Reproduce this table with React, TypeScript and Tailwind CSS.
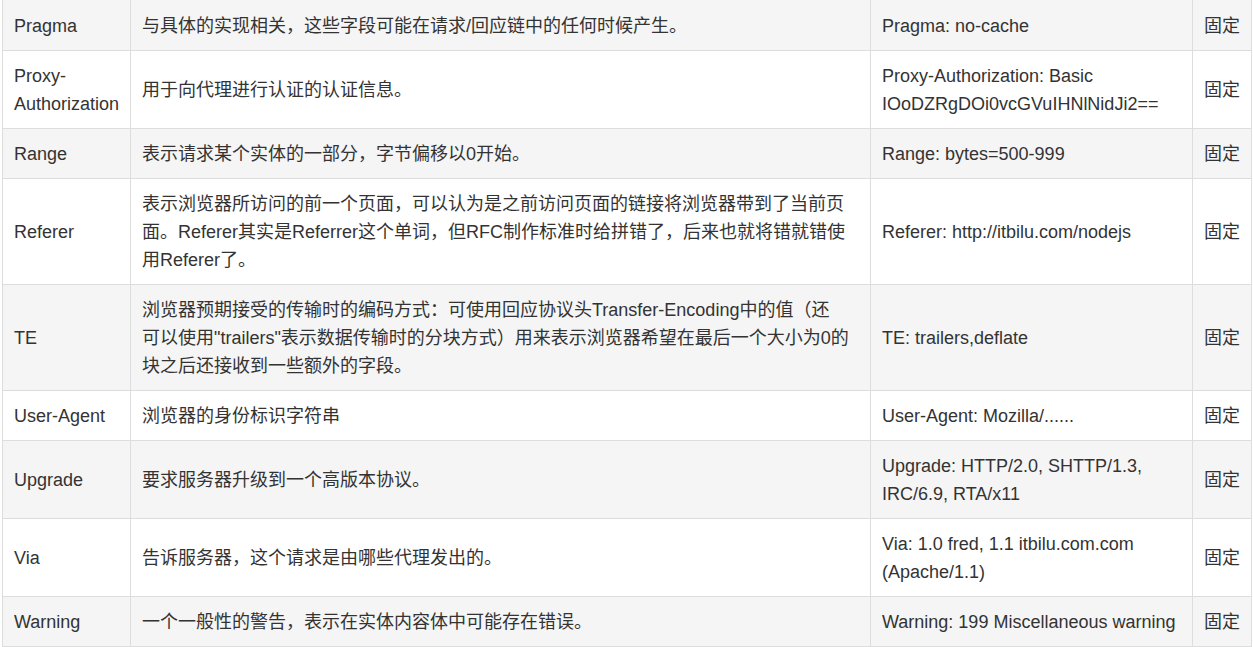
type Row = {
  name: string[];
  desc: string[];
  example: string[];
  kind: string;
};

const rows: Row[] = [
  {
    name: ["Pragma"],
    desc: ["与具体的实现相关，这些字段可能在请求/回应链中的任何时候产生。"],
    example: ["Pragma: no-cache"],
    kind: "固定",
  },
  {
    name: ["Proxy-", "Authorization"],
    desc: ["用于向代理进行认证的认证信息。"],
    example: ["Proxy-Authorization: Basic", "IOoDZRgDOi0vcGVuIHNlNidJi2=="],
    kind: "固定",
  },
  {
    name: ["Range"],
    desc: ["表示请求某个实体的一部分，字节偏移以0开始。"],
    example: ["Range: bytes=500-999"],
    kind: "固定",
  },
  {
    name: ["Referer"],
    desc: [
      "表示浏览器所访问的前一个页面，可以认为是之前访问页面的链接将浏览器带到了当前页",
      "面。Referer其实是Referrer这个单词，但RFC制作标准时给拼错了，后来也就将错就错使",
      "用Referer了。",
    ],
    example: ["Referer: http://itbilu.com/nodejs"],
    kind: "固定",
  },
  {
    name: ["TE"],
    desc: [
      "浏览器预期接受的传输时的编码方式：可使用回应协议头Transfer-Encoding中的值（还",
      "可以使用\"trailers\"表示数据传输时的分块方式）用来表示浏览器希望在最后一个大小为0的",
      "块之后还接收到一些额外的字段。",
    ],
    example: ["TE: trailers,deflate"],
    kind: "固定",
  },
  {
    name: ["User-Agent"],
    desc: ["浏览器的身份标识字符串"],
    example: ["User-Agent: Mozilla/......"],
    kind: "固定",
  },
  {
    name: ["Upgrade"],
    desc: ["要求服务器升级到一个高版本协议。"],
    example: ["Upgrade: HTTP/2.0, SHTTP/1.3,", "IRC/6.9, RTA/x11"],
    kind: "固定",
  },
  {
    name: ["Via"],
    desc: ["告诉服务器，这个请求是由哪些代理发出的。"],
    example: ["Via: 1.0 fred, 1.1 itbilu.com.com", "(Apache/1.1)"],
    kind: "固定",
  },
  {
    name: ["Warning"],
    desc: ["一个一般性的警告，表示在实体内容体中可能存在错误。"],
    example: ["Warning: 199 Miscellaneous warning"],
    kind: "固定",
  },
];

function Lines({ lines }: { lines: string[] }) {
  return (
    <>
      {lines.map((l, i) => (
        <span key={i} className="block whitespace-nowrap">
          {l}
        </span>
      ))}
    </>
  );
}

export default function App() {
  const base = "border border-[#dddddd] px-[11px] py-[10.5px] align-middle";
  // the table's top edge is cut off in the screenshot
  const first = "border border-t-0 border-[#dddddd] px-[11px] pt-[11.5px] pb-[10.5px] align-middle";

  return (
    <div className="w-[1253px] h-[647px] overflow-hidden bg-white">
      <table className="ml-[2px] w-[1250px] table-fixed border-collapse text-[18px] leading-[28px] text-[#333333] font-['Liberation_Sans','Noto_Sans_CJK_SC',sans-serif]">
        <colgroup>
          <col className="w-[128px]" />
          <col className="w-[740px]" />
          <col className="w-[322px]" />
          <col />
        </colgroup>
        <tbody>
          {rows.map((r, i) => {
            const cell = i === 0 ? first : base;
            return (
              <tr key={i} className={i % 2 === 0 ? "bg-[#f5f5f5]" : "bg-white"}>
                <td className={cell}>
                  <Lines lines={r.name} />
                </td>
                <td className={cell}>
                  <Lines lines={r.desc} />
                </td>
                <td className={cell}>
                  <Lines lines={r.example} />
                </td>
                <td className={cell}>{r.kind}</td>
              </tr>
            );
          })}
        </tbody>
      </table>
    </div>
  );
}
